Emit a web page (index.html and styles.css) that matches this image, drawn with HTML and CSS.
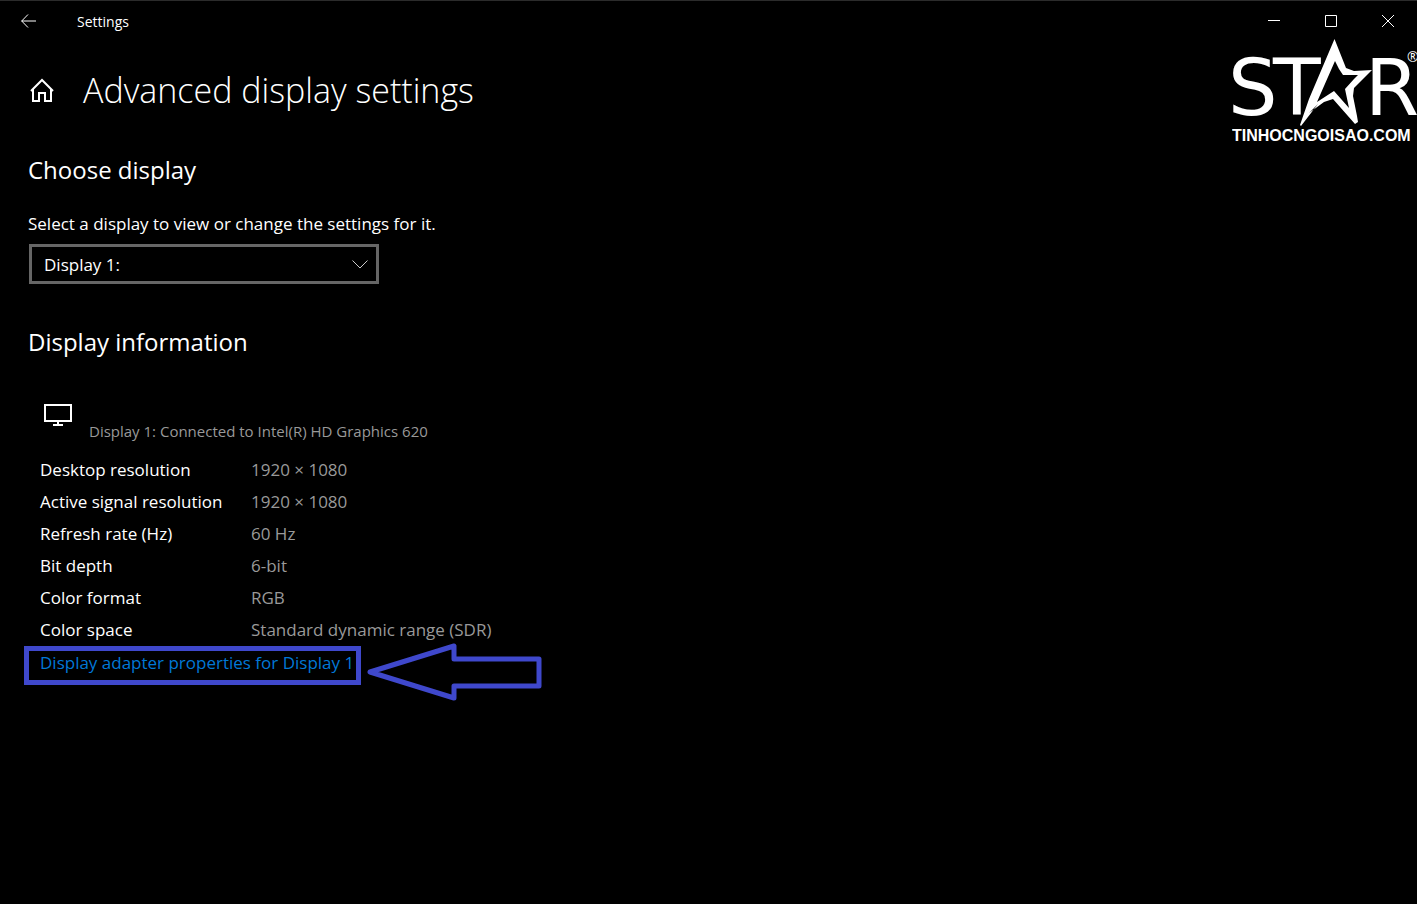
FILE: index.html
```html
<!DOCTYPE html>
<html lang="en">

<head>
  <meta charset="UTF-8">
  <meta name="viewport" content="width=device-width, initial-scale=1.0">
  <title>Settings</title>
  <link rel="stylesheet" href="styles.css">
</head>

<body>
  <header class="titlebar">
    <button class="titlebar-button" type="button" aria-label="Back">
      <svg width="16" height="14" viewBox="0 0 16 14"><path d="M7 .5 .7 7l6.300 6.500M.5 7h14.500"/></svg>
    </button>
    <span class="titlebar-name">Settings</span>
    <button class="titlebar-button" type="button" aria-label="Minimize">
      <svg width="12" height="12" viewBox="0 0 12 12"><path d="M0 5.500h12"/></svg>
    </button>
    <button class="titlebar-button" type="button" aria-label="Maximize">
      <svg width="12" height="12" viewBox="0 0 12 12"><path d="M.5 .5h11v11H.5z"/></svg>
    </button>
    <button class="titlebar-button" type="button" aria-label="Close">
      <svg width="12" height="12" viewBox="0 0 12 12"><path d="M0 0l12 12M12 0 0 12"/></svg>
    </button>
  </header>

  <svg class="logo" width="185" height="108" viewBox="0 0 185 108" role="img" aria-label="Star">
    <text class="logo-letter" x="-4" y="77">S</text>
    <text class="logo-letter" x="41" y="77">T</text>
    <text class="logo-letter" x="133" y="77">R</text>
    <path class="logo-gap" d="M98 8 69 85 84 77 88 50Z"/>
    <path class="logo-star" fill-rule="evenodd" d="M102.500 1 114 30l8 3 18 -1 -18 18 -1 8 4 20 1 6 -3 2 -22 -25 -9 3 -15 11 9 -9L69 88l-1 -1 9 -26ZM103 23 85 64l17 -11 15 17 -4 -19 9 -10 4 -4 -15 0 -4 -6Z"/>
    <text class="logo-mark" x="175" y="24">®</text>
    <text class="logo-site" x="0" y="103">TINHOCNGOISAO.COM</text>
  </svg>

  <main class="settings">
    <div class="page-title">
      <svg class="home" width="24" height="24" viewBox="0 0 24 24"><path d="M1 13 12 2l11 11M3 11v12h6v-8h6v8h6V11"/></svg>
      <h1>Advanced display settings</h1>
    </div>

    <section class="choose">
      <h2>Choose display</h2>
      <label for="display">Select a display to view or change the settings for it.</label>
      <div class="select-box">
        <select id="display">
          <option>Display 1:</option>
        </select>
        <svg class="chevron" width="16" height="9" viewBox="0 0 16 9"><path d="M.5 .5 8 8 15.500 .5"/></svg>
      </div>
    </section>

    <section class="info">
      <h2>Display information</h2>
      <div class="monitor">
        <svg width="30" height="22" viewBox="0 0 30 22"><path d="M2 1h26v16H2zM15 17v4M10 21h10"/></svg>
        <p>Display 1: Connected to Intel(R) HD Graphics 620</p>
      </div>
      <dl class="details">
        <dt>Desktop resolution</dt>
        <dd>1920 × 1080</dd>
        <dt>Active signal resolution</dt>
        <dd>1920 × 1080</dd>
        <dt>Refresh rate (Hz)</dt>
        <dd>60 Hz</dd>
        <dt>Bit depth</dt>
        <dd>6-bit</dd>
        <dt>Color format</dt>
        <dd>RGB</dd>
        <dt>Color space</dt>
        <dd>Standard dynamic range (SDR)</dd>
      </dl>
      <div class="adapter">
        <a class="adapter-link" href="#">Display adapter properties for Display 1</a>
        <svg class="arrow" width="176" height="58" viewBox="0 0 176 58"><path d="M3 29 87 3v13h85v27H87v12Z"/></svg>
      </div>
    </section>
  </main>
</body>

</html>
```

FILE: styles.css
```css
html {
  box-sizing: border-box;
  font-family: "Open Sans", "Noto Sans", sans-serif;
  font-size: 17px;
  color: #fff;
  background-color: #000;
}

*,
*::after,
*::before {
  box-sizing: inherit;
}

body {
  position: relative;
  margin: 0;
  border-top: 1px solid #2b2b2b;
}

h1,
h2,
p,
dl,
dd {
  margin: 0;
  font-weight: 400;
}

svg {
  display: block;
  flex: none;
  fill: none;
  stroke: #fff;
}

.titlebar {
  display: flex;
  align-items: center;
  height: 40px;
  padding-right: 1px;
}

.titlebar-button {
  display: flex;
  align-items: center;
  justify-content: center;
  width: 57px;
  height: 40px;
  padding: 0;
  border: 0;
  background: none;
}

.titlebar-name {
  flex: 1;
  padding-left: 20px;
  font-size: 14px;
}

.logo {
  position: absolute;
  top: 37px;
  right: 0;
}

.logo text,
.logo-star {
  fill: #fff;
  stroke: none;
}

.logo-gap {
  fill: #000;
  stroke: none;
}

.logo-letter {
  font-family: "DejaVu Sans", sans-serif;
  font-size: 78px;
}

.logo-mark {
  font-size: 14px;
}

.logo-site {
  font-family: "Liberation Sans", Arial, sans-serif;
  font-size: 16px;
  font-weight: 700;
}

.settings {
  padding: 24px 28px;
}

.page-title {
  display: flex;
  align-items: center;
  gap: 29px;
  padding-left: 2px;
}

.home {
  stroke-width: 2;
}

h1 {
  font-size: 34px;
  font-weight: 300;
  line-height: 50px;
}

h2 {
  font-size: 24px;
  line-height: 32px;
}

.choose {
  margin-top: 39px;
}

.choose label {
  display: block;
  margin: 24px 0 6px;
  line-height: 28px;
}

.select-box {
  position: relative;
  width: 350px;
  max-width: 100%;
  margin-left: 1px;
}

.select-box select {
  display: block;
  width: 100%;
  height: 40px;
  padding: 0 12px;
  appearance: none;
  border: 3px solid #666;
  border-radius: 0;
  font: inherit;
  color: #fff;
  background-color: #000;
}

.chevron {
  position: absolute;
  top: 16px;
  right: 11px;
  pointer-events: none;
  stroke: #ccc;
}

.info {
  margin-top: 42px;
}

.monitor {
  display: flex;
  gap: 16px;
  margin-top: 46px;
  padding-left: 15px;
}

.monitor svg {
  stroke-width: 2;
}

.monitor p {
  padding-top: 15px;
  font-size: 15px;
  line-height: 24px;
  color: #999;
}

.details {
  display: grid;
  grid-template-columns: 211px 1fr;
  margin-top: 11px;
  padding-left: 12px;
  line-height: 32px;
}

.details dd {
  color: #999;
}

.adapter {
  position: relative;
  width: max-content;
  margin-left: -4px;
}

.adapter-link {
  display: block;
  padding: 0 2px 6px 11px;
  border: 5px solid #3f48cc;
  line-height: 23px;
  text-decoration: none;
  color: #0078d7;
}

.arrow {
  position: absolute;
  top: -3px;
  left: calc(100% + 6px);
  stroke: #3f48cc;
  stroke-width: 5;
  stroke-linejoin: round;
}
```
